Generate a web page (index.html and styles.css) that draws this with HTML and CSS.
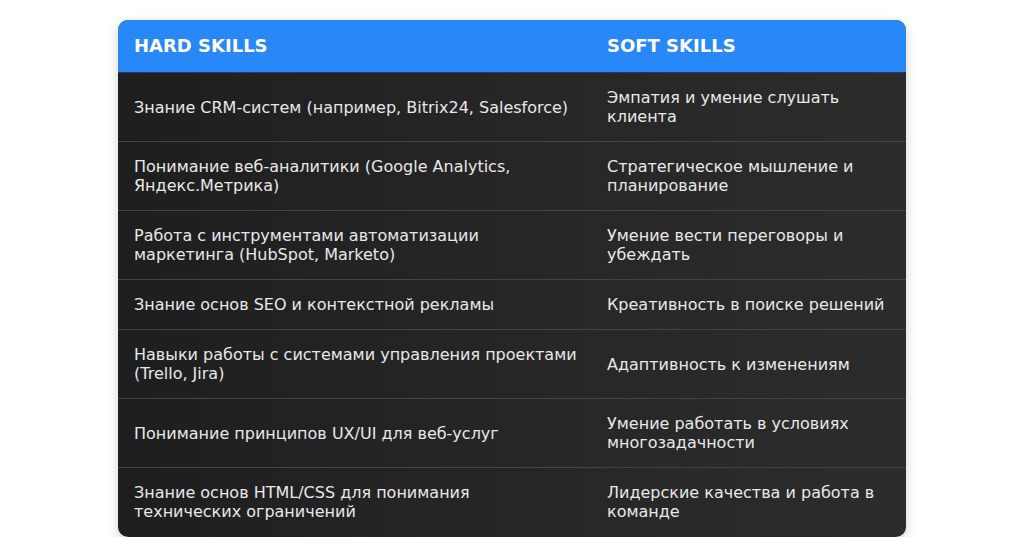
FILE: index.html
```html
<!DOCTYPE html>
<html lang="ru">
<head>
<meta charset="utf-8">
<title>Skills</title>
<link rel="stylesheet" href="styles.css">
</head>
<body>
<div class="page">
  <table class="skills">
    <thead>
      <tr>
        <th class="col-hard">Hard Skills</th>
        <th class="col-soft">Soft Skills</th>
      </tr>
    </thead>
    <tbody>
      <tr><td>Знание CRM-систем (например, Bitrix24, Salesforce)</td><td>Эмпатия и умение слушать клиента</td></tr>
      <tr><td>Понимание веб-аналитики (Google Analytics, Яндекс.Метрика)</td><td>Стратегическое мышление и планирование</td></tr>
      <tr><td>Работа с инструментами автоматизации маркетинга (HubSpot, Marketo)</td><td>Умение вести переговоры и убеждать</td></tr>
      <tr><td>Знание основ SEO и контекстной рекламы</td><td>Креативность в поиске решений</td></tr>
      <tr><td>Навыки работы с системами управления проектами (Trello, Jira)</td><td>Адаптивность к изменениям</td></tr>
      <tr><td>Понимание принципов UX/UI для веб-услуг</td><td>Умение работать в условиях многозадачности</td></tr>
      <tr><td>Знание основ HTML/CSS для понимания технических ограничений</td><td>Лидерские качества и работа в команде</td></tr>
    </tbody>
  </table>
</div>
</body>
</html>
```
FILE: styles.css
```css
* { box-sizing: border-box; }
html, body {
  margin: 0;
  padding: 0;
  background: #ffffff;
  font-family: "DejaVu Sans", sans-serif;
}
.page {
  padding: 20px 118px 0 118px;
}
.skills {
  width: 788px;
  border-collapse: separate;
  border-spacing: 0;
  border-radius: 10px;
  overflow: hidden;
  background: linear-gradient(90deg, #1e1e1e 0%, #262626 50%, #2c2c2c 100%);
  box-shadow: 0 4px 12px rgba(0, 0, 0, 0.18);
  table-layout: fixed;
}
.skills th {
  background: #2888f7;
  color: #ffffff;
  text-align: left;
  text-transform: uppercase;
  font-weight: bold;
  font-size: 18px;
  line-height: 20px;
  padding: 16px 12px 16px 16px;
  border-bottom: 1px solid #1d3f66;
}
.col-hard { width: 473px; }
.col-soft { width: 315px; }
.skills td {
  color: #e8e8e8;
  font-size: 16px;
  line-height: 19px;
  padding: 15px 10px 15px 16px;
  vertical-align: middle;
  border-top: 1px solid #444444;
}
.skills tbody tr:first-child td {
  border-top: none;
}
.skills tbody tr:last-child td {
  padding-bottom: 16px;
}
```
